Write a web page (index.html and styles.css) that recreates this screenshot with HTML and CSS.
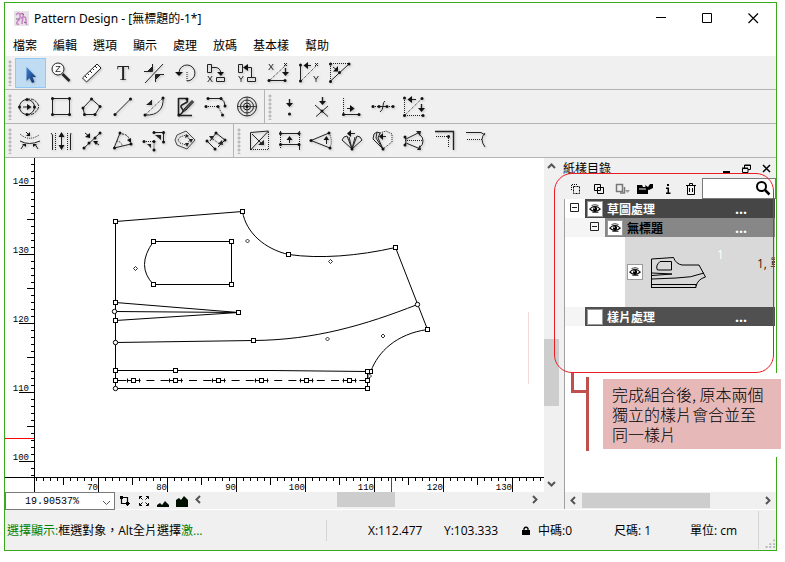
FILE: index.html
```html
<!DOCTYPE html>
<html lang="zh-Hant">
<head>
  <meta charset="UTF-8" />
  <meta name="viewport" content="width=device-width, initial-scale=1.0"/>
  <title>Pattern Design</title>
  <link rel="stylesheet" href="styles.css">
</head>
<body>
  <!-- shared symbols -->
  <svg class="defs" width="0" height="0" aria-hidden="true">
    <defs>
      <linearGradient id="blue" x1="0" y1="0" x2="1" y2="1">
        <stop offset="0" stop-color="#3d86dc"/>
        <stop offset="1" stop-color="#10285c"/>
      </linearGradient>
      <g id="node"><rect x="-2" y="-2" width="4" height="4" fill="#fff" stroke="#000"/></g>
      <g id="ring"><circle r="2.2" fill="#fff" stroke="#000"/></g>
      <g id="ctrl"><path d="M0-2L2 0L0 2L-2 0Z" fill="#fff" stroke="#000" stroke-width=".8"/></g>
      <g id="stitch"><path d="M-7 0H7M-6-2V2M6-2V2" stroke="#000"/><rect x="-2" y="-2" width="4" height="4" fill="#fff" stroke="#000"/></g>
      <g id="dot"><circle r="1.5" fill="#111" stroke="none"/></g>
      <g id="down"><path d="M0-4V2" stroke-width="1.4"/><path d="M-3.5 0H3.5L0 4Z" fill="#111" stroke="none"/></g>
      <g id="eye">
        <path d="M-6 0Q0-6.5 6 0Q0 5.5-6 0Z" fill="#fff" stroke="#000" stroke-width="1.2"/>
        <circle r="2.5" fill="#000"/><circle cx="-1" cy="-1" r=".8" fill="#fff"/>
        <path d="M-4-4Q0-6 4-4M-3 4H4" fill="none" stroke="#000" stroke-width=".8"/>
      </g>
    </defs>
  </svg>

  <div class="window">
    <header class="titlebar">
      <svg class="logo" viewBox="0 0 15 15" fill="none">
        <rect width="15" height="15" fill="#e6e2e6"/>
        <path d="M2 4Q5 0 6 4T3 11Q2 14 5 13M6 3Q10 1 9 6T8 13M7 7Q12 4 12 9T13 13" stroke="#c685c4" stroke-width="1.5"/>
        <path d="M2 8H5M8 2L10 4M10 11L12 12" stroke="#86508c"/>
      </svg>
      <span class="title">Pattern Design - [無標題的-1*]</span>
      <button class="win-btn" aria-label="最小化"><svg viewBox="0 0 11 11"><path d="M0 4.5H10" stroke="#000"/></svg></button>
      <button class="win-btn" aria-label="最大化"><svg viewBox="0 0 11 11"><path d="M.5.5H9.5V9.5H.5Z" fill="none" stroke="#000"/></svg></button>
      <button class="win-btn" aria-label="關閉"><svg viewBox="0 0 11 11"><path d="M.5.5L10 10M10 .5L.5 10" stroke="#000" stroke-width="1.2"/></svg></button>
    </header>

    <nav class="menubar">
      <a href="#">檔案</a>
      <a href="#">編輯</a>
      <a href="#">選項</a>
      <a href="#">顯示</a>
      <a href="#">處理</a>
      <a href="#">放碼</a>
      <a href="#">基本樣</a>
      <a href="#">幫助</a>
    </nav>

    <div class="toolrow">
      <div class="toolbar">
        <span class="grip"></span>
        <button class="tool active" aria-label="選擇"><svg viewBox="0 0 31 30"><path d="M11.5 9V23L14.5 20L17 25L19.5 24L17.5 19H21Z" fill="url(#blue)" stroke="none"/></svg></button>
        <button class="tool" aria-label="縮放"><svg viewBox="0 0 31 30"><circle cx="12" cy="11" r="6" fill="#f8f8f8"/><path d="M16.5 16L23.5 23" stroke-width="2.6"/><text x="12" y="14" class="mini">Z</text></svg></button>
        <button class="tool" aria-label="量度"><svg viewBox="0 0 31 30"><path d="M5.5 20L20 6L24 10L9.5 24Z" fill="#fff"/><path d="M8 18L10 20M10.5 15.5L12 17M13 13L15 15M15.5 10.5L17 12M18 8L20 10"/></svg></button>
        <button class="tool" aria-label="文字"><svg viewBox="0 0 31 30"><text x="15" y="22" class="big">T</text></svg></button>
        <button class="tool" aria-label="剪角"><svg viewBox="0 0 31 30"><path d="M24 6L6 25M5 13.5H13.5V6M25 16.5H16.5V24"/><path d="M9 13L13 9V13ZM21 17L17 21V17Z" fill="#222"/></svg></button>
        <button class="tool" aria-label="旋轉"><svg viewBox="0 0 31 30"><path d="M9 14A8 8 0 1 1 17 23"/><path class="dash" d="M17 14V23"/><path d="M5 14H13L9 18Z" fill="#111" stroke="none"/></svg></button>
        <button class="tool" aria-label="X 對齊"><svg viewBox="0 0 31 30"><path d="M6.5 6.5H10.5V14.5H6.5ZM15.5 19.5H23.5V23.5H15.5ZM11 9.5H15Q19 10 20 15"/><path d="M16 14H23L20 18Z" fill="#111" stroke="none"/><text x="9" y="24" class="mini">X</text></svg></button>
        <button class="tool" aria-label="Y 對齊"><svg viewBox="0 0 31 30"><path d="M6.5 6.5H10.5V14.5H6.5ZM15.5 19.5H23.5V23.5H15.5ZM13 9.5H19.5V19"/><path d="M16 6V13L11 9.5Z" fill="#111" stroke="none"/><text x="9" y="24" class="mini">Y</text></svg></button>
        <button class="tool" aria-label="X 投影"><svg viewBox="0 0 31 30"><path class="dash" d="M7 22L23 7"/><path d="M6 22.5H22M21 5L24 8M24 5L21 8" stroke-width="1"/><use href="#dot" x="6" y="22.5"/><use href="#dot" x="22" y="22.5"/><use href="#down" x="22.5" y="14"/><text x="8" y="12" class="mini">X</text></svg></button>
        <button class="tool" aria-label="Y 投影"><svg viewBox="0 0 31 30"><path class="dash" d="M7 23L22 8"/><path d="M6.5 7V23M14 7.5H17M21 5L24 8M24 5L21 8"/><path d="M14 4V11L9.5 7.5Z" fill="#111" stroke="none"/><use href="#dot" x="6.5" y="7"/><use href="#dot" x="6.5" y="23"/><text x="22" y="24" class="mini">Y</text></svg></button>
        <button class="tool" aria-label="斜線投影"><svg viewBox="0 0 31 30"><path class="dash" d="M5.5 23V5.5H24"/><path d="M5 23.5L24 6M8 9L12 12"/><path d="M13 8V13.500H8Z" fill="#111" stroke="none"/><use href="#dot" x="5.5" y="6"/><use href="#dot" x="24" y="6"/><use href="#dot" x="14.5" y="14.5"/><use href="#dot" x="5.5" y="23.5"/></svg></button>
      </div>
    </div>

    <div class="toolrow">
      <div class="toolbar">
        <span class="grip"></span>
        <button class="tool" aria-label="偏移圓"><svg viewBox="0 0 31 30"><circle cx="12" cy="15" r="7.5"/><path d="M12 7.5Q20 5 24 14.500Q20 24 12 22.5" stroke-dasharray="3 1"/><path d="M8 15H13"/><path d="M12 12V18L16.5 15Z" fill="#111" stroke="none"/><use href="#dot" x="4.5" y="15"/><use href="#dot" x="19.5" y="15"/><use href="#dot" x="12" y="7.5"/><use href="#dot" x="12" y="22.5"/></svg></button>
        <button class="tool" aria-label="矩形"><svg viewBox="0 0 31 30"><path d="M6.5 6.5H23.5V22.5H6.5Z"/><use href="#dot" x="6.5" y="6.5"/><use href="#dot" x="23.5" y="6.5"/><use href="#dot" x="6.5" y="22.5"/><use href="#dot" x="23.5" y="22.5"/></svg></button>
        <button class="tool" aria-label="多邊形"><svg viewBox="0 0 31 30"><path d="M7.5 22.5L6 16L14.5 7L23 14.5L18 22.5Z"/><use href="#dot" x="7.5" y="22.5"/><use href="#dot" x="6" y="16"/><use href="#dot" x="14.5" y="7"/><use href="#dot" x="23" y="14.5"/><use href="#dot" x="18" y="22.5"/></svg></button>
        <button class="tool" aria-label="直線"><svg viewBox="0 0 31 30"><path d="M7 22.5L22.5 7"/><use href="#dot" x="7" y="22.5"/><use href="#dot" x="22.5" y="7"/></svg></button>
        <button class="tool" aria-label="弧線"><svg viewBox="0 0 31 30"><path class="dash" d="M6 23L24 6"/><path d="M24 6C25 16 19 24 6 23M13 8L10 12"/><path d="M13 8V13H7Z" fill="#222" stroke="none"/><use href="#dot" x="6" y="23"/><use href="#dot" x="24" y="6"/></svg></button>
        <button class="tool" aria-label="手繪"><svg viewBox="0 0 31 30"><path d="M8.5 6.5H16M8.5 6V23.5H22" stroke-width="1.6"/><path d="M16 7C21 11 12 11 11 14S17 17 10 23" stroke-width="1.6"/><path d="M23.5 10L16 18L13 20L14 17L22 8.5Z" fill="#555"/><use href="#dot" x="17" y="7"/><use href="#dot" x="9" y="23"/></svg></button>
        <button class="tool" aria-label="延伸"><svg viewBox="0 0 31 30"><path d="M7 6.5H20Q24 9 24 14"/><path class="dash" d="M5 14.5H17L21 22"/><use href="#dot" x="7" y="6.5"/><use href="#dot" x="20" y="6.5"/><use href="#dot" x="24" y="14"/><use href="#dot" x="5" y="14.5"/><use href="#dot" x="17" y="14.5"/><use href="#dot" x="21.5" y="23"/></svg></button>
        <button class="tool" aria-label="同心圓"><svg viewBox="0 0 31 30"><circle cx="15" cy="14.5" r="9.5"/><circle cx="15" cy="14.5" r="6.5"/><circle cx="15" cy="14.5" r="3.5"/><path d="M5 14.5H25M15 5V24" stroke-width=".8"/><use href="#dot" x="15" y="14.5"/></svg></button>
      </div>
      <div class="toolbar">
        <span class="grip"></span>
        <button class="tool" aria-label="加點"><svg viewBox="0 0 31 30"><use href="#down" x="14.5" y="11"/><use href="#dot" x="14.5" y="22"/></svg></button>
        <button class="tool" aria-label="交點"><svg viewBox="0 0 31 30"><use href="#down" x="16.5" y="9"/><path d="M9 13L22 24.5M22 14L10 24.5"/><use href="#dot" x="16" y="19"/></svg></button>
        <button class="tool" aria-label="水平點"><svg viewBox="0 0 31 30"><path class="dash" d="M6.5 6V22"/><path d="M6 22.5H22M10 16.5H14"/><path d="M13 13V20L17.5 16.5Z" fill="#111" stroke="none"/><use href="#dot" x="6.5" y="22.5"/><use href="#dot" x="22" y="22.5"/></svg></button>
        <button class="tool" aria-label="分點"><svg viewBox="0 0 31 30"><path class="dash" d="M5 14.5H25"/><path d="M17 9Q15 10 15 14T12 20M11 14.5H19"/><use href="#dot" x="5" y="14.5"/><use href="#dot" x="11" y="14.5"/><use href="#dot" x="19" y="14.5"/><use href="#dot" x="25" y="14.5"/></svg></button>
        <button class="tool" aria-label="對稱點"><svg viewBox="0 0 31 30"><path class="dash" d="M5.5 6V23.5H24M6 23L23 6.5"/><path d="M12 7.5H17"/><path d="M13 4V11L8.5 7.5Z" fill="#111" stroke="none"/><use href="#down" x="22.5" y="16"/><use href="#dot" x="5.5" y="6"/><use href="#dot" x="23" y="6.5"/><use href="#dot" x="5.5" y="23.5"/><use href="#dot" x="24" y="23.5"/></svg></button>
      </div>
    </div>

    <div class="toolrow">
      <div class="toolbar">
        <span class="grip"></span>
        <button class="tool" aria-label="曲線合併"><svg viewBox="0 0 31 30"><path class="dash" d="M5 8Q14 16 24 9"/><path d="M5 15Q14 20 25 15M11 6L14 9M9 18L6 23M20 18L23 23"/><path d="M15 6V10H11ZM7 18H11V21ZM18 21V18H22Z" fill="#111" stroke="none"/></svg></button>
        <button class="tool" aria-label="平行"><svg viewBox="0 0 31 30"><path class="dash" d="M9.5 7V24M21.5 7V24"/><path d="M5 7L6.5 9V24M25 7L24.5 9V24M15.5 8V23"/><path d="M12.5 11L15.5 6L18.5 11ZM12.5 19L15.5 24L18.5 19Z" fill="#111" stroke="none"/></svg></button>
        <button class="tool" aria-label="切割"><svg viewBox="0 0 31 30"><path d="M6 23L24 6M8 7L12 10M22 19L18 16"/><path d="M13 7V12L8 11ZM21 15H16L19 19Z" fill="#111" stroke="none"/><use href="#dot" x="7" y="22"/><use href="#dot" x="12" y="17"/><use href="#dot" x="18" y="12"/><use href="#dot" x="23" y="7"/></svg></button>
        <button class="tool" aria-label="角度"><svg viewBox="0 0 31 30"><path d="M12 7L6 22L23 18"/><path d="M14 8Q20 8 22 15" stroke-dasharray="2 1"/><path class="dash" d="M9 15Q14 16 14 20"/><path d="M19 14L23 17L23 12Z" fill="#111" stroke="none"/><use href="#dot" x="12" y="7"/><use href="#dot" x="6.5" y="22"/><use href="#dot" x="23" y="18"/></svg></button>
        <button class="tool" aria-label="移動"><svg viewBox="0 0 31 30"><path d="M15 6.5H24.5V16"/><path class="dash" d="M5 15.5H15V24"/><path d="M16 9H22V14ZM8 18H12V22Z" fill="#222" stroke="none"/><use href="#dot" x="15" y="6.5"/><use href="#dot" x="24.5" y="6.5"/><use href="#dot" x="24.5" y="16"/><use href="#dot" x="5" y="15.5"/><use href="#dot" x="15" y="15.5"/><use href="#dot" x="15" y="24"/></svg></button>
        <button class="tool" aria-label="縮放外形"><svg viewBox="0 0 31 30"><path d="M5 14L7 9L16 5L25 14L17 23L7 19Z" stroke-width=".8"/><path class="dash" d="M8 14L10 11L16 9L20 14L16 19L10 17Z"/><path d="M16 8L19 10L15 12ZM19 13H23L21 17ZM15 17H19L17 21Z" fill="#222" stroke="none"/></svg></button>
        <button class="tool" aria-label="翻轉"><svg viewBox="0 0 31 30"><path d="M15 7L24 14M6 15L14 23M15 7L9 15M24 14L17 21"/><path class="dash" d="M9 11L20 19"/><path d="M13 10L8 10L11 14ZM21 14L17 18L22 19Z" fill="#222" stroke="none"/><use href="#dot" x="6" y="15"/><use href="#dot" x="15" y="7"/><use href="#dot" x="24" y="14"/><use href="#dot" x="14" y="23"/></svg></button>
      </div>
      <div class="toolbar">
        <span class="grip"></span>
        <button class="tool" aria-label="對角"><svg viewBox="0 0 31 30"><path d="M6.5 24V6.5L24.5 5L6.5 24M8 8L18 18" stroke-width="1"/><path class="dash" d="M24.5 6V23.5H7"/><path d="M20 14V19H14Z" fill="#222" stroke="none"/></svg></button>
        <button class="tool" aria-label="展開"><svg viewBox="0 0 31 30"><path d="M5 7.5H24M5 18.5H24M24.5 18V24M14.5 17V12"/><path class="dash" d="M5.5 5V22M24.5 5V18"/><path d="M11.5 14H17.5L14.5 10Z" fill="#111" stroke="none"/><use href="#dot" x="5.5" y="7.5"/><use href="#dot" x="24" y="7.5"/><use href="#dot" x="5.5" y="18.5"/><use href="#dot" x="24" y="18.5"/></svg></button>
        <button class="tool" aria-label="扇形"><svg viewBox="0 0 31 30"><path d="M23 7L5 14.5L24 22M20.500 18V13"/><path class="dash" d="M23 7Q27 14 24 22"/><path d="M17.5 14H23L20.5 10Z" fill="#111" stroke="none"/><use href="#dot" x="23" y="7"/><use href="#dot" x="5" y="14.5"/><use href="#dot" x="24" y="22"/></svg></button>
        <button class="tool" aria-label="褶"><svg viewBox="0 0 31 30"><path d="M15 23L5 14L7 11L10 10L15 23L12 11M15 23L18 11M15 23L20 10L23 11L25 14Z" stroke-width="1"/><path d="M13 7.500H18"/><path d="M14 4V11L10 7.500Z" fill="#111" stroke="none"/><use href="#dot" x="15" y="23"/></svg></button>
        <button class="tool" aria-label="轉褶"><svg viewBox="0 0 31 30"><path d="M15 23L5 13L6 8L9 6L8 12L15 23M9 6L12 7L10 12L15 23" stroke-width="1"/><path d="M13 10.5H18"/><path class="dash" d="M12 7L18 5L24 8L24 16L15 23"/><path d="M15 7V14L11 10.500Z" fill="#111" stroke="none"/><use href="#dot" x="15" y="23"/></svg></button>
        <button class="tool" aria-label="加褶"><svg viewBox="0 0 31 30"><path d="M6 10Q8 15 6 20M7 13L19 7M7 17L19 22M21 9Q24 11 24 15Q24 19 21 21" stroke-width="1"/><path class="dash" d="M6 14.500H24"/><path d="M17 5L22 5L21 10ZM18 24L22 24L21 19Z" fill="#222" stroke="none"/><use href="#dot" x="6" y="11"/><use href="#dot" x="6" y="19"/></svg></button>
        <button class="tool" aria-label="角縫份"><svg viewBox="0 0 31 30"><path d="M5 5.5H23.5V24" stroke-width="1.400"/><path class="dash" d="M6 10.5H18.5V22"/><use href="#dot" x="18.5" y="10.5"/></svg></button>
        <button class="tool" aria-label="縫份"><svg viewBox="0 0 31 30"><path d="M5 6.5H20L24 9M24 7Q18 13 24 21"/><path class="dash" d="M6 13.5H21"/></svg></button>
      </div>
    </div>

    <main class="workspace">
      <section class="editor">
        <div class="canvas">
          <svg class="ruler-left">
            <defs>
              <pattern id="ticks-y" x="0" y="27" width="30" height="69" patternUnits="userSpaceOnUse">
                <path d="M14 .5H30M26 7.5H30M26 14.5H30M26 21.5H30M26 28.5H30M22 34.5H30M26 41.5H30M26 48.5H30M26 55.5H30M26 62.5H30" stroke="#000"/>
              </pattern>
            </defs>
            <rect width="30" height="100%" fill="url(#ticks-y)"/>
            <rect x="29" width="1" height="100%"/>
            <path d="M0 280.5H29" stroke="#f00"/>
            <g class="marks">
              <text x="24" y="26">140</text>
              <text x="24" y="95">130</text>
              <text x="24" y="164">120</text>
              <text x="24" y="233">110</text>
              <text x="24" y="302">100</text>
            </g>
          </svg>

          <svg class="drawing" width="509" height="319" viewBox="35 158 509 319" fill="none" stroke="#000">
            <path d="M528.5 312V384" stroke="#f0dada"/>
            <path d="M115.5 388.5V221.5L242.5 211.5C246 233 265 249 288.5 254.5C320 259 358 256 395.5 247.5L427.5 329.5C396 334 378 352 371 371"/>
            <path d="M153.5 284.5H231.5V241.5H153.5Q135.5 266 153.5 284.5"/>
            <path d="M115.5 302.5L238.5 312.5L115.5 320.5M115.5 311.5L238.5 312.5"/>
            <path d="M115.5 342.5L253.5 340.5C315 340 365 325 417.5 304.5"/>
            <path d="M115.5 370.5H272L367.5 371.5V388.5H115.5"/>
            <path d="M118 380.5H367" stroke-dasharray="8 6.2"/>
            <use href="#stitch" x="133.5" y="380.5"/>
            <use href="#stitch" x="175.5" y="380.5"/>
            <use href="#stitch" x="218.5" y="380.5"/>
            <use href="#stitch" x="261.5" y="380.5"/>
            <use href="#stitch" x="306.5" y="380.5"/>
            <use href="#stitch" x="349.5" y="380.5"/>
            <use href="#node" x="115.5" y="221.5"/>
            <use href="#node" x="242.5" y="211.5"/>
            <use href="#node" x="288.5" y="254.5"/>
            <use href="#node" x="395.5" y="247.5"/>
            <use href="#node" x="427.5" y="329.5"/>
            <use href="#node" x="153.5" y="241.5"/>
            <use href="#node" x="231.5" y="241.5"/>
            <use href="#node" x="231.5" y="284.5"/>
            <use href="#node" x="153.5" y="284.5"/>
            <use href="#node" x="115.5" y="302.5"/>
            <use href="#node" x="115.5" y="320.5"/>
            <use href="#node" x="238.5" y="312.5"/>
            <use href="#node" x="253.5" y="340.5"/>
            <use href="#node" x="115.5" y="370.5"/>
            <use href="#node" x="175.5" y="370.5"/>
            <use href="#node" x="115.5" y="380.5"/>
            <use href="#ctrl" x="369.5" y="376"/>
            <use href="#node" x="367.5" y="380.5"/>
            <use href="#node" x="370.5" y="371.5"/>
            <use href="#node" x="367.5" y="371.5"/>
            <use href="#node" x="367.5" y="388.5"/>
            <use href="#ring" x="114.5" y="311.5"/>
            <use href="#ring" x="115.5" y="342.5"/>
            <use href="#ring" x="115.5" y="388.5"/>
            <use href="#ring" x="417.5" y="304.5"/>
            <use href="#ctrl" x="135.5" y="268.5"/>
            <use href="#ctrl" x="247.5" y="241"/>
            <use href="#ctrl" x="330.5" y="261.5"/>
            <use href="#ctrl" x="327.5" y="339"/>
            <use href="#ctrl" x="383" y="336"/>
          </svg>

          <svg class="ruler-bottom">
            <defs>
              <pattern id="ticks-x" x="93" y="0" width="69" height="15" patternUnits="userSpaceOnUse">
                <path d="M.5 0V15M7.5 0V4M14.5 0V4M21.5 0V4M28.5 0V4M34.5 0V8M41.5 0V4M48.5 0V4M55.5 0V4M62.5 0V4" stroke="#000"/>
              </pattern>
            </defs>
            <rect x="30" width="100%" height="15" fill="url(#ticks-x)"/>
            <path d="M29.5 0V15" stroke="#000"/>
            <rect width="100%" height="1"/>
            <path d="M386.5 1V15" stroke="#f00"/>
            <g class="marks">
              <text x="93" y="13">70</text>
              <text x="162" y="13">80</text>
              <text x="231" y="13">90</text>
              <text x="300" y="13">100</text>
              <text x="369" y="13">110</text>
              <text x="438" y="13">120</text>
              <text x="507" y="13">130</text>
            </g>
          </svg>
        </div>

        <div class="scroll vertical">
          <svg class="arrow" viewBox="0 0 9 9"><path d="M1 6L4.5 2.5L8 6"/></svg>
          <div class="track"><div class="thumb"></div></div>
          <svg class="arrow" viewBox="0 0 9 9"><path d="M1 3L4.5 6.5L8 3"/></svg>
        </div>

        <div class="viewbar">
          <div class="zoom">
            <select aria-label="縮放比例"><option>19.90537%</option></select>
            <svg viewBox="0 0 9 9"><path d="M1 3L4.5 6.5L8 3" fill="none" stroke="#555"/></svg>
          </div>
          <button aria-label="框選"><svg viewBox="0 0 12 12"><path d="M2.5 1V8.5H11M1 2.5H8.5V11" fill="none" stroke="#000" stroke-width="1.2"/><path d="M1 1H4V4H1ZM7 7H10V10H7Z" fill="#000"/></svg></button>
          <button aria-label="全螢幕"><svg viewBox="0 0 12 12"><path d="M1.5 4V1.5H4M8 1.5H10.5V4M10.5 8V10.5H8M4 10.5H1.5V8M2 2L4.5 4.5M10 2L7.5 4.5M2 10L4.5 7.5M10 10L7.5 7.5" fill="none" stroke="#000"/></svg></button>
          <button aria-label="縮小"><svg viewBox="0 0 12 12"><path d="M0 12V10L3 8L5 10L8 6L12 10V12Z" fill="#001000"/></svg></button>
          <button aria-label="放大"><svg viewBox="0 0 12 12"><path d="M0 12V5L3 3L5 5L8 1L12 5V12Z" fill="#001000"/></svg></button>
          <div class="scroll">
            <svg class="arrow" viewBox="0 0 9 9"><path d="M6 1L2.5 4.5L6 8"/></svg>
            <div class="track"><div class="thumb"></div></div>
            <svg class="arrow" viewBox="0 0 9 9"><path d="M3 1L6.5 4.5L3 8"/></svg>
          </div>
        </div>
      </section>

      <aside class="dock">
        <div class="dock-title">
          <span>紙樣目錄</span>
          <button aria-label="收起"><svg viewBox="0 0 9 9"><path d="M1 8H8" stroke="#000" stroke-width="2"/></svg></button>
          <button aria-label="浮動"><svg viewBox="0 0 9 9"><path d="M2.5 4V1H8.5V5.5H6M2 1.5H9M.5 4.5H6V8.5H.5ZM0 4H6" fill="none" stroke="#000"/></svg></button>
          <button aria-label="關閉面板"><svg viewBox="0 0 9 9"><path d="M1 1L8 8M8 1L1 8" stroke="#000" stroke-width="1.5"/></svg></button>
        </div>
        <div class="dock-tools">
          <button aria-label="新增"><svg viewBox="0 0 16 12" fill="none" stroke="#000"><path d="M5.5 3.5H11.5V10.5H5.5Z" stroke-dasharray="2 1"/><path d="M3.500 7V1.500H9" stroke-dasharray="1 1"/></svg></button>
          <button aria-label="複製"><svg viewBox="0 0 16 12" fill="none" stroke="#000"><path d="M3.5 1.5H9.5V7.5H3.5ZM6.5 4.5H12.5V10.5H6.5Z" fill="#f0f0f0"/></svg></button>
          <button aria-label="貼上"><svg viewBox="0 0 16 12" fill="none" stroke="#777"><path d="M2.5 1.5H8.5V8.5H2.5Z" stroke-width="1.5"/><path d="M6 10H10.500V4" stroke-width="1.5"/><path d="M11 7H16L13.5 10Z" fill="#999" stroke="none"/></svg></button>
          <button aria-label="開啟"><svg viewBox="0 0 16 12"><path d="M0 2H5L6 4H11V11H0Z" fill="#000"/><path d="M2 6H9" stroke="#f0f0f0"/><path d="M8 2L11 4L13 1H16V5L12 7L9 6Z" fill="#000"/></svg></button>
          <button aria-label="資訊"><svg viewBox="0 0 16 12"><path d="M7 1H9V3H7ZM6 4.5H9V9.5H10.5V11H6V9.5H7.5V6H6Z" fill="#000"/></svg></button>
          <button aria-label="刪除"><svg viewBox="0 0 16 12" fill="none" stroke="#000"><path d="M3 2.5H13M6.5 2V.5H9.5V2M4.5 3V11.5H11.5V3M6.5 5V9M9.5 5V9"/></svg></button>
          <div class="search">
            <input type="text" aria-label="搜尋">
            <svg viewBox="0 0 16 16"><circle cx="6.5" cy="6.5" r="4.5" fill="none" stroke="#000" stroke-width="2"/><path d="M10 10L14.5 14.5" stroke="#000" stroke-width="2.5"/></svg>
          </div>
        </div>
        <div class="tree">
          <div class="row">
            <div class="branch"><svg class="expander" viewBox="0 0 9 9"><path d="M.5.5H8.5V8.5H.5ZM2 4.5H7"/></svg></div>
            <div class="bar dark"><svg class="eye" viewBox="-8 -8 16 16"><use href="#eye"/></svg><b>草圖處理</b><span class="more">...</span></div>
          </div>
          <div class="row child">
            <div class="branch"><svg class="expander" viewBox="0 0 9 9"><path d="M.5.5H8.5V8.5H.5ZM2 4.5H7"/></svg></div>
            <div class="bar mid"><svg class="eye" viewBox="-8 -8 16 16"><use href="#eye"/></svg><b>無標題</b><span class="more">...</span></div>
          </div>
          <div class="row piece">
            <div class="branch"></div>
            <div class="bar light">
              <svg class="eye" viewBox="-8 -8 16 16"><use href="#eye"/></svg>
              <svg class="thumbnail" viewBox="0 0 56 33" fill="none" stroke="#000">
                <path d="M.5 31V3L22.5 1.5Q25 8 31 9H48L54.5 21Q47 23 45 30M9 5.5H20.5V14H6.5Q4 10 9 5.5M1 19.5L21 18L1 17M1 23L25 22Q40 22 53 17"/>
                <path d="M0 28.5H45M0 31.5H45V28"/>
              </svg>
              <span class="count">1</span>
              <span class="desc">1, 單</span>
            </div>
          </div>
          <div class="row last">
            <div class="branch"></div>
            <div class="bar dark2"><span class="eye"></span><b>樣片處理</b><span class="more">...</span></div>
          </div>
        </div>
        <div class="scroll dock-scroll">
          <svg class="arrow" viewBox="0 0 9 9"><path d="M6 1L2.5 4.5L6 8"/></svg>
          <div class="track"><div class="thumb"></div></div>
          <svg class="arrow" viewBox="0 0 9 9"><path d="M3 1L6.5 4.5L3 8"/></svg>
        </div>

        <!-- annotation over the panel -->
        <div class="outline"></div>
        <div class="connector"></div>
        <div class="note"><p>完成組合後, 原本兩個<br>獨立的樣片會合並至<br>同一樣片</p></div>
      </aside>
    </main>

    <footer class="statusbar">
      <div class="hint"><em>選擇顯示:</em>框選對象，Alt全片選擇<em>激...</em></div>
      <span class="field">X:112.477</span>
      <span class="field">Y:103.333</span>
      <span class="field wide"><svg viewBox="0 0 8 9"><path d="M2 4V2.5Q4 0 6 2.5V4" fill="none" stroke="#000" stroke-width="1.3"/><path d="M0 4H8V9H0Z"/></svg>中碼:0</span>
      <span class="field">尺碼: 1</span>
      <span class="field unit">單位: cm</span>
      <svg class="resize" viewBox="0 0 18 38"><path d="M15 29H17V31H15ZM11 33H13V35H11ZM15 33H17V35H15ZM7 36H9V38H7ZM11 36H13V38H11ZM15 36H17V38H15Z" fill="#b5b5b5"/></svg>
    </footer>
  </div>
</body>
</html>
```

FILE: styles.css
```css
* {
  box-sizing: border-box;
}

body {
  margin: 0;
  padding: 2px 8px 11px 4px;
  background: #fff;
  color: #000;
  font-family: "Open Sans", "Noto Sans CJK TC", sans-serif;
  font-size: 12px;
}

svg {
  display: block;
  flex: none;
}

.defs {
  position: absolute;
}

button {
  display: flex;
  align-items: center;
  justify-content: center;
  padding: 0;
  border: none;
  background: none;
}

.window {
  display: flex;
  flex-direction: column;
  min-height: calc(100vh - 13px);
  border: 1px solid #3aaa1c;
  background: #f0f0f0;
}

/* title and menu */
.titlebar {
  display: flex;
  align-items: center;
  height: 30px;
  padding-left: 9px;
  background: #fff;
}

.logo {
  width: 15px;
  height: 15px;
}

.title {
  flex: 1;
  padding-left: 5px;
  font-family: "Noto Sans", "Noto Sans CJK TC", sans-serif;
}

.win-btn {
  width: 46px;
  height: 30px;
}

.win-btn svg {
  width: 11px;
  height: 11px;
}

.menubar {
  display: flex;
  align-items: center;
  gap: 16px;
  height: 23px;
  padding-left: 8px;
  background: #fff;
}

.menubar a {
  color: #000;
  text-decoration: none;
}

/* toolbars */
.toolrow {
  display: flex;
  height: 34px;
  border-bottom: 1px solid #b4b4b4;
}

.toolbar {
  display: flex;
  align-items: center;
}

.toolbar + .toolbar {
  margin-left: 1px;
  border-left: 1px solid #b4b4b4;
}

.grip {
  width: 10px;
  height: 26px;
  background: radial-gradient(circle, #bbb 1px, transparent 2px) 3px 0 / 4px 4px repeat-y;
}

.tool {
  width: 31px;
  height: 30px;
}

.tool svg {
  width: 31px;
  height: 30px;
  fill: none;
  stroke: #222;
  filter: drop-shadow(1px 1px 1px rgba(0, 0, 0, .2));
}

.tool.active {
  border: 1px solid #90c8f6;
  background: #c0dcf3;
}

.tool .dash {
  stroke-dasharray: 1 1;
}

.mini,
.big {
  fill: #222;
  stroke: none;
  text-anchor: middle;
}

.mini {
  font-size: 9px;
}

.big {
  font-family: "Liberation Serif", serif;
  font-size: 20px;
}

/* workspace */
.workspace {
  display: flex;
  flex: 1;
}

.editor {
  display: grid;
  flex: 1;
  grid-template-columns: 1fr 15px;
  grid-template-rows: 1fr 17px;
  min-width: 0;
}

.canvas {
  display: grid;
  grid-template-columns: 30px 1fr;
  grid-template-rows: 1fr 15px;
  min-width: 0;
  overflow: hidden;
  background: #fff;
}

.ruler-left {
  width: 30px;
  height: 100%;
}

.ruler-bottom {
  grid-column: 1 / 3;
  width: 100%;
  height: 15px;
}

.marks {
  font-family: "Liberation Mono", monospace;
  font-size: 9px;
  text-anchor: end;
}

.scroll {
  display: flex;
  align-items: center;
  height: 15px;
  padding: 0 3px;
  background: #f0f0f0;
}

.vertical {
  flex-direction: column;
  height: auto;
  padding: 4px 0;
}

.arrow {
  width: 9px;
  height: 9px;
  fill: none;
  stroke: #555;
  stroke-width: 2;
}

.track {
  display: flex;
  flex: 1;
  align-self: stretch;
}

.thumb {
  width: 58px;
  margin-left: 41%;
  background: #cdcdcd;
}

.vertical .track {
  flex-direction: column;
  justify-content: center;
  padding-top: 94px;
}

.vertical .thumb {
  width: 15px;
  height: 67px;
  margin: 0;
}

.viewbar {
  display: flex;
  grid-column: 1 / 3;
  align-items: flex-start;
}

.viewbar .scroll {
  flex: 1;
  padding-right: 20px;
}

.viewbar button {
  width: 19px;
  height: 17px;
}

.viewbar button svg {
  width: 12px;
  height: 12px;
}

.zoom {
  position: relative;
}

.zoom select {
  display: block;
  width: 110px;
  height: 18px;
  padding: 0 19px;
  border: 1px solid #7a7a7a;
  border-radius: 0;
  appearance: none;
  background: #fff;
  color: #000;
  font-family: "Liberation Mono", monospace;
  font-size: 10px;
}

.zoom svg {
  position: absolute;
  top: 6px;
  right: 4px;
  width: 9px;
  height: 9px;
}

/* pattern panel */
.dock {
  position: relative;
  display: flex;
  flex-direction: column;
  width: 217px;
}

.dock-title {
  display: flex;
  align-items: center;
  height: 20px;
  padding-left: 4px;
}

.dock-title span {
  flex: 1;
}

.dock-title button {
  width: 20px;
}

.dock-title svg {
  width: 9px;
  height: 9px;
}

.dock-tools {
  display: flex;
  align-items: center;
  height: 21px;
  padding-left: 5px;
}

.dock-tools button {
  width: 23px;
}

.dock-tools button svg {
  width: 16px;
  height: 12px;
}

.search {
  position: relative;
  flex: 1;
}

.search input {
  display: block;
  width: 100%;
  height: 21px;
  padding: 0 20px 0 4px;
  border: 1px solid #7a7a7a;
  background: #fff;
}

.search svg {
  position: absolute;
  top: 2px;
  right: 5px;
  width: 16px;
  height: 16px;
}

.tree {
  flex: 1;
  margin-left: 5px;
  border-left: 1px solid #a0a0a0;
  background: #fff;
}

.row {
  display: flex;
  height: 19px;
}

.branch {
  width: 20px;
  padding: 4px 5px;
}

.child .branch {
  width: 40px;
  padding-left: 25px;
}

.piece .branch {
  width: 60px;
}

.child .branch,
.last .branch {
  background: #f5f5f5;
}

.expander {
  width: 9px;
  height: 9px;
  fill: none;
  stroke: #222;
}

.bar {
  display: flex;
  flex: 1;
  align-items: center;
  min-width: 0;
  margin-right: 1px;
  padding-left: 2px;
  overflow: hidden;
  color: #fff;
  white-space: nowrap;
}

.bar b {
  flex: 1;
  padding-left: 4px;
}

.dark {
  background: #464646;
}

.dark2 {
  background: #505050;
}

.mid {
  background: #878787;
}

.mid b {
  color: #000;
}

.light {
  background: #d9d9d9;
}

.piece {
  height: 70px;
}

.eye {
  flex: none;
  width: 16px;
  height: 16px;
  border: 1px solid #999;
  background: #fff;
}

.more {
  width: 40px;
  font-size: 14px;
  font-weight: bold;
}

.thumbnail {
  width: 56px;
  height: 33px;
  margin-left: 8px;
}

.count {
  flex: none;
  width: 50px;
  padding: 0 0 36px 10px;
}

.desc {
  padding-bottom: 18px;
  color: #402000;
}

.dock-scroll {
  height: 17px;
  margin-left: 5px;
  padding: 0 4px;
  border-left: 1px solid #a0a0a0;
}

.dock-scroll .track {
  padding: 1px 0;
}

.dock-scroll .thumb {
  width: 69%;
  margin-left: 4px;
}

.outline {
  position: absolute;
  top: 15px;
  left: -5px;
  width: 220px;
  height: 200px;
  border: 1px solid #ed1c24;
  border-radius: 18px;
}

.connector {
  position: absolute;
  top: 215px;
  left: 12px;
  width: 16px;
  height: 20px;
  border: solid #c0504d;
  border-width: 0 0 3px 3px;
}

.note {
  position: absolute;
  top: 215px;
  left: 27px;
  padding: 6px 0 8px 17px;
  background: #fff;
}

.note::before {
  content: "";
  position: absolute;
  top: 4px;
  bottom: 6px;
  left: 0;
  width: 3px;
  background: #c0504d;
}

.note p {
  width: 178px;
  margin: 0;
  padding: 5px 9px;
  background: #e6b9b8;
  font-family: "Noto Sans CJK TC", sans-serif;
  font-size: 16px;
  font-weight: 300;
  line-height: 20px;
}

/* status bar */
.statusbar {
  display: flex;
  align-items: center;
  height: 41px;
  border-top: 1px solid #fff;
}

.hint {
  flex: 1;
  margin-right: 41px;
  padding-left: 2px;
  border-right: 1px solid #d5d5d5;
  line-height: 21px;
  white-space: nowrap;
}

.hint em {
  color: #008000;
  font-style: normal;
}

.field {
  width: 76px;
  white-space: nowrap;
}

.wide {
  display: flex;
  align-items: center;
  gap: 8px;
  width: 94px;
  padding-left: 2px;
}

.wide svg {
  width: 8px;
  height: 9px;
}

.unit {
  width: 68px;
}

.resize {
  width: 18px;
  height: 38px;
  border-left: 1px solid #d5d5d5;
}
```
